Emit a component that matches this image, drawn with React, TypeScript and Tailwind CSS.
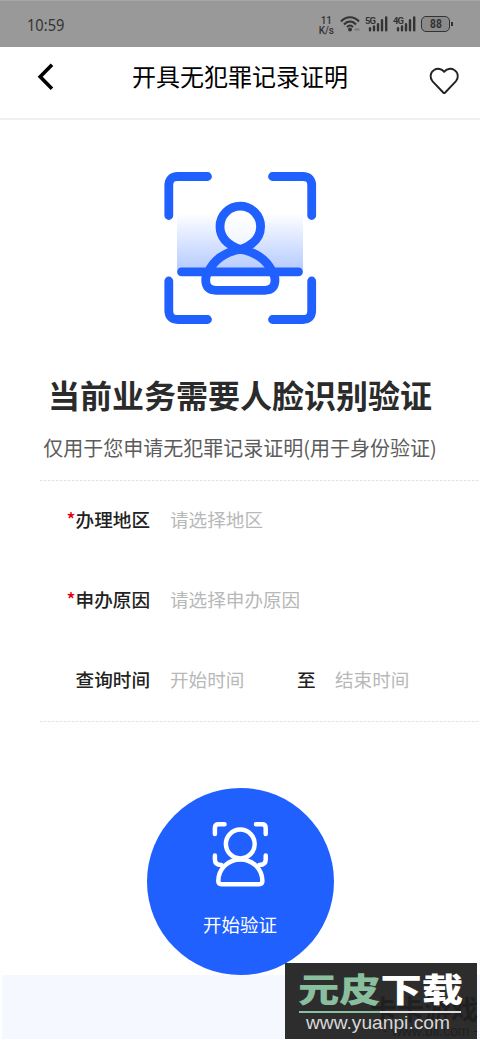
import type { ReactNode } from 'react'

function SignalBars() {
  return (
    <svg width="20" height="16" viewBox="0 0 20 16" fill="none" stroke="#333" strokeWidth="2.4" strokeLinecap="round">
      <path d="M2 14.3v-2M6 14.3v-3.8M10 14.3V8.2M14 14.3V4.2M18.2 14.3V1.4" />
    </svg>
  )
}

function Signal({ label }: { label: string }) {
  return (
    <div className="relative h-4 w-[23px]">
      <span className="absolute left-0 top-0 text-[9.5px] font-bold leading-[9px] tracking-[-0.9px]">{label}</span>
      <div className="flex justify-end">
        <SignalBars />
      </div>
    </div>
  )
}

function StatusBar() {
  return (
    <div className="flex h-[47px] items-start border-t border-[#a6a6a6] bg-[#999] text-[#333]">
      <span className="ml-[27px] mt-[14px] origin-left scale-x-[0.86] font-['Noto_Sans'] text-[17px] leading-5">10:59</span>
      <div className="ml-auto mr-[27px] mt-[15px] flex">
        <div className="mr-[6px] text-center font-['Roboto'] text-[10px] font-medium leading-[9.5px]">
          <p>11</p>
          <p>K/s</p>
        </div>
        <svg className="mr-[4px]" width="21" height="16" viewBox="0 0 21 16" fill="none" stroke="#333" strokeWidth="2">
          <path d="M1 5.500C6-.2 14-.2 19 5.500M4 8.500c3.400-4 8.600-4 12 0M7 11.200c1.800-2.200 4.200-2.200 6 0" />
          <circle cx="10" cy="13.500" r="2" fill="#333" stroke="none" />
          <path d="M14.500 13.500h5" stroke="#777" strokeWidth="2" />
        </svg>
        <div className="flex gap-[5px] font-['Roboto']">
          <Signal label="5G" />
          <Signal label="4G" />
        </div>
        <div className="ml-[5px] flex h-4 w-[29px] items-center justify-center rounded-[5px] border-[1.5px] border-[#333] bg-[#8a8a8a] font-['Roboto'] text-[12px] font-bold leading-3">
          <span className="scale-x-[0.85]">88</span>
        </div>
        <div className="ml-px mt-[6px] h-1 w-[2px] bg-[#333]" />
      </div>
    </div>
  )
}

function NavBar() {
  return (
    <div className="flex h-[73px] border-b-2 border-[#f0f0f0]">
      <svg className="ml-[35px] mt-[15px]" width="20" height="30" viewBox="0 0 20 30" fill="none" stroke="#000" strokeWidth="3.600">
        <path d="M17 2.800 5.200 14.800l11.800 12" />
      </svg>
      <h1 className="ml-[-3px] mt-[14px] flex-1 text-center text-[24px] leading-[30px] text-black">开具无犯罪记录证明</h1>
      <svg className="mr-[20px] mt-[20px]" width="32" height="30" viewBox="0 0 32 30" fill="none" stroke="#222" strokeWidth="1.900" strokeLinejoin="round">
        <path d="M16.200 4.800C13.800 1.700 9.500.9 6.100 3 2 5.600 1.500 10.800 4.600 14.300L15.200 25.500q1 1 2 0L27.800 14.300C30.900 10.800 30.400 5.600 26.300 3 22.900.9 18.600 1.700 16.200 4.800Z" />
      </svg>
    </div>
  )
}

function FaceScan() {
  return (
    <svg width="180" height="180" viewBox="0 0 180 180" fill="none" stroke="#1f60ff" strokeWidth="8.800" strokeLinecap="round" strokeLinejoin="round">
      <defs>
        <linearGradient id="scan" x1="0" y1="0" x2="0" y2="1">
          <stop offset="0" stopColor="#1f60ff" stopOpacity="0" />
          <stop offset="1" stopColor="#1f60ff" stopOpacity="0.330" />
        </linearGradient>
      </defs>
      <rect x="27" y="53" width="126" height="57" fill="url(#scan)" stroke="none" />
      <path d="M18.800 55.500V25.500q0-9 9-9H57.500M122.500 16.500h30.200q9 0 9 9v30M161.700 121v29.500q0 9-9 9H122.500M57.500 159.500H27.800q-9 0-9-9V121" />
      <circle cx="90.300" cy="67" r="20.600" fill="#fff" fillOpacity="0.650" stroke="none" />
      <path d="M90.300 89.500C79 85.500 70 79 70 66.500a20.300 20.300 0 0 1 40.600 0c0 12.500-9 19-20.300 23Z" />
      <path d="M90.300 89.500C76 91.500 63.500 99.500 58.500 112q-2.800 3-2.800 8 0 10.300 10.300 10.300h48.700q10.300 0 10.300-10.300 0-5-2.800-8C117.200 99.500 104.600 91.500 90.300 89.500Z" />
      <path d="M31.500 111.800h117" />
    </svg>
  )
}

function Divider() {
  return <div className="ml-[40px] h-px bg-[repeating-linear-gradient(90deg,#e0e0e0_0_2px,#f8f8f8_2px_4px)]" />
}

function Row({ label, required, children }: { label: string; required?: boolean; children: ReactNode }) {
  return (
    <div className="flex h-20 items-center pb-[4px] text-[18.600px] leading-7 text-[#b8b8b8]">
      <div className="w-[150px] text-right font-medium text-[#222]">
        {required && <span className="text-[#e60012]">*</span>}
        {label}
      </div>
      <div className="ml-[20px] flex">{children}</div>
    </div>
  )
}

function StartButton() {
  return (
    <button className="flex h-[187px] w-[187px] flex-col items-center rounded-full bg-[#1f60ff] text-white">
      <svg className="mt-[32px]" width="60" height="68" viewBox="0 0 60 68" fill="none" stroke="#fff" strokeWidth="4.500" strokeLinecap="round" strokeLinejoin="round">
        <path d="M4.900 14V8q0-3.700 3.700-3.700H14.500M46 4.300h6q3.700 0 3.700 3.700v6M4.900 35.500v4q0 5.500 6.500 5.500M55.700 35.500v4q0 5.500-6.500 5.500" />
        <circle cx="30.300" cy="24" r="14.400" />
        <path d="M8.300 61C8.300 49 18 39.500 30.300 39.500S52.400 49 52.400 61q0 3.200-3.200 3.200H11.500q-3.200 0-3.200-3.200Z" />
      </svg>
      <span className="mt-[22px] text-[18.500px] leading-7">开始验证</span>
    </button>
  )
}

function Watermark() {
  return (
    <div className="absolute bottom-px right-0 h-[76px] w-[195px]">
      <div className="h-full w-[192px] bg-[#2d2d2e]" />
      <div className="absolute right-[2px] top-[31px] whitespace-nowrap text-right text-black/30">
        <p className="text-[27px] font-bold leading-[30px]">卡卡游戏</p>
        <p className="font-['Liberation_Sans'] text-[14px] leading-[15px]">- www.bii.com -</p>
      </div>
      <div className="absolute left-[13px] top-[3px] flex origin-left scale-x-[1.250] whitespace-nowrap text-[33px] font-black leading-[45px]">
        <span className="text-[#8abf9d]">元皮</span>
        <span className="text-white">下载</span>
      </div>
      <div className="absolute left-[14px] top-[48px] flex h-[2px] w-[162px]">
        <div className="w-1/2 bg-[#8abf9d]" />
        <div className="w-1/2 bg-[#ddd]" />
      </div>
      <p className="absolute left-[21px] top-[50px] font-['Liberation_Sans'] text-[19.200px] leading-5 text-[#d8d8d8]">www.yuanpi.com</p>
    </div>
  )
}

export default function App() {
  return (
    <div className="relative flex h-[1040px] w-[480px] flex-col overflow-hidden bg-white font-['Noto_Sans_CJK_SC',sans-serif]">
      <StatusBar />
      <NavBar />
      <div className="mt-[40px] flex justify-center">
        <FaceScan />
      </div>
      <h2 className="mt-[32px] text-center text-[32px] font-bold leading-[44px] text-[#2b2b2b]">当前业务需要人脸识别验证</h2>
      <p className="mb-[17px] mt-[17px] text-center text-[20px] leading-[30px] text-[#5c5c5c]">仅用于您申请无犯罪记录证明(用于身份验证)</p>
      <Divider />
      <Row label="办理地区" required>
        请选择地区
      </Row>
      <Row label="申办原因" required>
        请选择申办原因
      </Row>
      <Row label="查询时间">
        <span className="w-[127px]">开始时间</span>
        <span className="w-[38px] font-medium text-[#222]">至</span>
        <span>结束时间</span>
      </Row>
      <Divider />
      <div className="mt-[66px] flex justify-center">
        <StartButton />
      </div>
      <div className="ml-[2px] h-[64px] bg-[#f5f9ff]" />
      <Watermark />
    </div>
  )
}
